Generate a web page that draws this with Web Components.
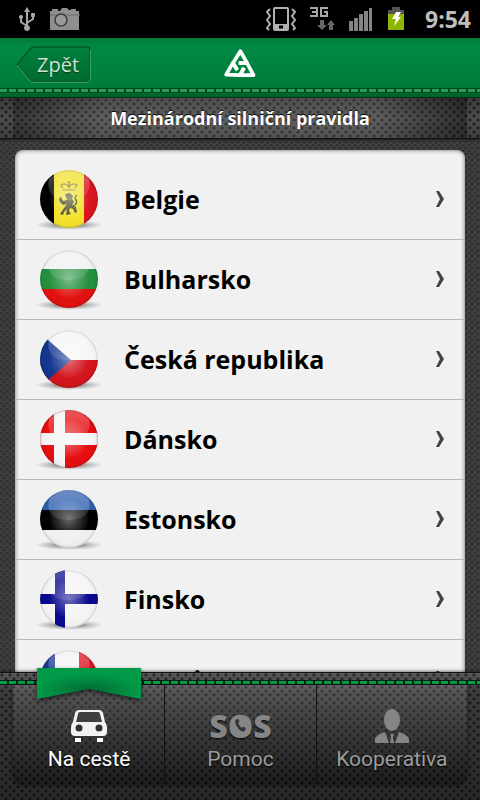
<!DOCTYPE html>
<html lang="cs">
<head>
<meta charset="utf-8">
<meta name="viewport" content="width=device-width, initial-scale=1">
<title>Mezinárodní silniční pravidla</title>
<style>
    :root {
        --holes:
            radial-gradient(circle at 2px 2px, rgba(0, 0, 0, 0.55) 1px, transparent 2px) 0 0 / 8px 8px,
            radial-gradient(circle at 6px 6px, rgba(0, 0, 0, 0.55) 1px, transparent 2px) 0 0 / 8px 8px;
        --weave:
            radial-gradient(circle at 1px 1px, rgba(0, 0, 0, 0.25) 1px, transparent 2px) 0 0 / 6px 6px,
            radial-gradient(circle at 4px 4px, rgba(0, 0, 0, 0.25) 1px, transparent 2px) 0 0 / 6px 6px;
        --font-title: "Open Sans", "Noto Sans", sans-serif;
        --font-ui: Roboto, "Noto Sans", sans-serif;
    }

    body {
        margin: 0;
        background: #000;
    }
</style>
</head>
<body>
<road-app>
    <status-bar slot="status" time="9:54"></status-bar>
    <app-header slot="header" back="Zpět"></app-header>
    <page-title slot="title">Mezinárodní silniční pravidla</page-title>
    <country-list>
        <country-row flag="be">Belgie</country-row>
        <country-row flag="bg">Bulharsko</country-row>
        <country-row flag="cz">Česká republika</country-row>
        <country-row flag="dk">Dánsko</country-row>
        <country-row flag="ee">Estonsko</country-row>
        <country-row flag="fi">Finsko</country-row>
        <country-row flag="fr">Francie</country-row>
    </country-list>
    <tab-bar slot="tabs">
        <tab-item icon="car" active>Na cestě</tab-item>
        <tab-item icon="sos">Pomoc</tab-item>
        <tab-item icon="person">Kooperativa</tab-item>
    </tab-bar>
</road-app>

<script>
// App shell: bars on top, list in the middle, tabs at the bottom
class RoadApp extends HTMLElement {
    constructor() {
        super();
        this.attachShadow({ mode: 'open' });
        this.shadowRoot.innerHTML = `
            <style>
                :host {
                    display: flex;
                    flex-direction: column;
                    height: 100vh;
                    overflow: hidden;
                    background: var(--weave), #3f3f3f;
                }

                main {
                    flex: 1;
                    min-height: 0;
                    overflow: hidden;
                    padding: 11px 15px 0;
                }
            </style>
            <slot name="status"></slot>
            <slot name="header"></slot>
            <slot name="title"></slot>
            <main><slot></slot></main>
            <slot name="tabs"></slot>
        `;
    }
}

// System status bar
class StatusBar extends HTMLElement {
    constructor() {
        super();
        this.attachShadow({ mode: 'open' });
    }

    connectedCallback() {
        this.shadowRoot.innerHTML = `
            <style>
                :host {
                    display: flex;
                    align-items: center;
                    justify-content: space-between;
                    height: 38px;
                    padding: 0 9px 0 18px;
                    background: #000;
                    color: #bebebe;
                }

                .group {
                    display: flex;
                    align-items: center;
                    gap: 14px;
                }

                svg {
                    display: block;
                }

                time {
                    font: 700 23px/38px var(--font-title);
                    margin-left: 6px;
                }
            </style>
            <div class="group">
                <svg width="18" height="26" viewBox="0 0 18 26" fill="#a6a6a6" stroke="#a6a6a6">
                    <path d="M9 5v17M9 20l-6-4v-5M9 17l6-4V9" fill="none" stroke-width="2"/>
                    <path d="M9 1l3 5H6z" stroke="none"/>
                    <circle cx="9" cy="22" r="2.5"/>
                    <circle cx="3" cy="11" r="1.6"/>
                    <path d="M13.5 7.500h3v3h-3z"/>
                </svg>
                <svg width="30" height="24" viewBox="0 0 30 24">
                    <path d="M0 4h2V2h6v2h2l2-3h5l2 2h2V2h5v2h3v19H0z" fill="#8f8f8f"/>
                    <path d="M0 8h30" stroke="#6d6d6d"/>
                    <circle cx="11" cy="13" r="6" fill="#999" stroke="#3c3c3c" stroke-width="1.5"/>
                </svg>
            </div>
            <div class="group">
                <svg width="30" height="24" viewBox="0 0 30 24" fill="none" stroke="#b0b0b0">
                    <path d="M4 2L1 5l3 4-3 4 3 4-3 4 2 2M26 2l3 3-3 4 3 4-3 4 3 4-2 2" stroke-width="2"/>
                    <rect x="8" y="1" width="14" height="22" rx="1" stroke-width="2"/>
                    <path d="M8 19.500h14" stroke-width="5"/>
                    <path d="M13 20h4" stroke="#000" stroke-width="3"/>
                </svg>
                <svg width="25" height="24" viewBox="0 0 25 24">
                    <path d="M0 1h7v8H0M2 5h5M18 1h-7v8h6V5h-3" fill="none" stroke="#a8a8a8" stroke-width="2"/>
                    <path d="M10 13h4v5h3l-5 5-5-5h3zM19 23h4v-5h2l-4-5-4 5h2z" fill="#666"/>
                </svg>
                <svg width="24" height="24" viewBox="0 0 24 24" fill="#858585">
                    <path d="M0 14h4v10H0zM5 11h4v13H5zM10 7h4v17h-4zM15 4h4v20h-4zM20 1h3v23h-3z"/>
                </svg>
                <svg width="18" height="24" viewBox="0 0 18 24">
                    <path d="M5 0h8v3h4v6H1V3h4z" fill="#555"/>
                    <path d="M1 7h16v16H1z" fill="#8db600"/>
                    <path d="M9 5h5l-3 5h3l-7 9 2-7H5z" fill="#fff"/>
                </svg>
                <time>${this.getAttribute('time')}</time>
            </div>
        `;
    }
}

// Green header with the back button, the logo and a stitched seam
class AppHeader extends HTMLElement {
    constructor() {
        super();
        this.attachShadow({ mode: 'open' });
    }

    connectedCallback() {
        this.shadowRoot.innerHTML = `
            <style>
                :host {
                    display: block;
                    background: linear-gradient(#007a39, #008943 8px, #007c3b 48px, #00602c);
                    border-bottom: 1px solid #003317;
                }

                .bar {
                    display: grid;
                    grid-template-columns: 1fr auto 1fr;
                    align-items: center;
                    height: 50px;
                    padding: 0 16px;
                }

                button {
                    position: relative;
                    justify-self: start;
                    width: 75px;
                    height: 37px;
                    margin-top: 3px;
                    padding: 0 0 0 9px;
                    border: 0;
                    background: none;
                    color: #cfe0d0;
                    font: 400 20px/36px var(--font-title);
                    text-shadow: 0 1px 1px #00401c;
                    cursor: pointer;
                }

                button svg {
                    position: absolute;
                    inset: 0;
                }

                button span {
                    position: relative;
                }

                .seam {
                    height: 3px;
                    margin-bottom: 4px;
                    border: solid #00491f;
                    border-width: 1px 0;
                    background: repeating-linear-gradient(90deg, #2a9c5a 0 7px, #00491f 7px 9px);
                }
            </style>
            <div class="bar">
                <button type="button">
                    <svg width="75" height="37" viewBox="0 0 75 37">
                        <defs>
                            <linearGradient id="g" x2="0" y2="1">
                                <stop stop-color="#00813c"/>
                                <stop offset="1" stop-color="#006a31"/>
                            </linearGradient>
                        </defs>
                        <path d="M1 18.500L14 3q2-2 4-2h53q3 0 3 3v29q0 3-3 3H18q-2 0-4-2z" fill="url(#g)" stroke="#00592a" stroke-width="1.500"/>
                        <path d="M1 19L14 35q1 1.500 4 1.500h53q3.500 0 3.500-3V4" fill="none" stroke="#3ca26a"/>
                    </svg>
                    <span>${this.getAttribute('back')}</span>
                </button>
                <svg width="32" height="30" viewBox="0 0 32 30" role="img" aria-label="Kooperativa">
                    <defs>
                        <path id="link" d="M14.500 15H23L29.500 27.200H16L19.500 20.500"/>
                    </defs>
                    <g fill="none" stroke="#fff" stroke-width="3.700" stroke-linejoin="round">
                        <use href="#link"/>
                        <use href="#link" transform="rotate(120 16 19)"/>
                        <use href="#link" transform="rotate(240 16 19)"/>
                    </g>
                </svg>
            </div>
            <div class="seam"></div>
        `;
    }
}

// Perforated title strip
class PageTitle extends HTMLElement {
    constructor() {
        super();
        this.attachShadow({ mode: 'open' });
        this.shadowRoot.innerHTML = `
            <style>
                :host {
                    display: block;
                    padding: 0 13px;
                    border-bottom: 1px solid #111;
                    background: var(--holes), linear-gradient(#3a3a3a, #4c4c4c 50%, #404040);
                    box-shadow: 0 1px 2px rgba(0, 0, 0, 0.5);
                }

                h1 {
                    margin: 0;
                    background: linear-gradient(90deg, rgba(0, 0, 0, 0.25), rgba(255, 255, 255, 0.1) 20% 80%, rgba(0, 0, 0, 0.35));
                    color: #fff;
                    font: 700 18px/40px var(--font-title);
                    text-align: center;
                    text-shadow: 0 -1px 1px #000;
                }
            </style>
            <h1><slot></slot></h1>
        `;
    }
}

class CountryList extends HTMLElement {
    constructor() {
        super();
        this.attachShadow({ mode: 'open' });
        this.shadowRoot.innerHTML = `
            <style>
                :host {
                    display: block;
                    padding-top: 10px;
                    border-radius: 8px 8px 0 0;
                    background: #f1f1f1;
                    box-shadow: inset 0 0 4px rgba(0, 0, 0, 0.6);
                }
            </style>
            <nav><slot></slot></nav>
        `;
    }
}

// One country: flag, name and arrow
class CountryRow extends HTMLElement {
    constructor() {
        super();
        this.attachShadow({ mode: 'open' });
    }

    connectedCallback() {
        const flag = this.getAttribute('flag');
        this.shadowRoot.innerHTML = `
            <style>
                :host {
                    display: block;
                }

                a {
                    display: flex;
                    align-items: center;
                    height: 77px;
                    padding: 0 20px 2px 19px;
                    border-bottom: 1px solid #b9b9b9;
                    color: #000;
                    font: 700 25px/32px var(--font-title);
                    text-decoration: none;
                }

                .name {
                    flex: 1;
                    margin-left: 20px;
                }
            </style>
            <a href="#${flag}">
                <flag-icon code="${flag}"></flag-icon>
                <span class="name"><slot></slot></span>
                <svg width="10" height="16" viewBox="0 0 10 16">
                    <path d="M1 0h3l5 8-5 8H1l4-8z" fill="#444"/>
                </svg>
            </a>
        `;
    }
}

// Glossy round flags, drawn in a 58x58 circle
const FLAGS = {
    be: `<path d="M0 0h14v58H0z" fill="#000"/><path d="M14 0h30v58H14z" fill="#f2e22a"/><path d="M44 0h14v58H44z" fill="#d9141e"/>
        <g fill="none" stroke="#85792f" stroke-width="1.200">
            <path d="M23 20h12M23 18q-4-4 1-4 4 0 5 4 1-4 5-4 5 0 1 4M29 18v-6M27.500 12h3"/>
        </g>
        <path d="M25 24l5-1 3 3-1 3 2 3-2 3 4 2 1 5-2 1-2-4-3-1-1 3 2 3-5 1 1-6-3 3-1 3-3-1 4-6 3-4-4 1-3-3-1-4 2-1 2 4 4-1z" fill="#4c4826"/>
        <path d="M33 36q5-2 3-6-2-3 1-5" fill="none" stroke="#4c4826" stroke-width="1.500"/>`,
    bg: '<path d="M0 0h58v19H0z" fill="#f1f1f1"/><path d="M0 19h58v20H0z" fill="#238f3c"/><path d="M0 39h58v19H0z" fill="#e11010"/>',
    cz: '<path d="M0 0h58v30H0z" fill="#f6f6f6"/><path d="M0 30h58v28H0z" fill="#d3141c"/><path d="M0 3l31 27L0 57z" fill="#14368f"/>',
    dk: '<path d="M0 0h58v58H0z" fill="#e60d10"/><path d="M14 0h11v58H14zM0 23h58v12H0z" fill="#f4f4f4"/>',
    ee: '<path d="M0 0h58v20H0z" fill="#2f5fae"/><path d="M0 20h58v20H0z" fill="#000"/><path d="M0 40h58v18H0z" fill="#f0f0f0"/>',
    fi: '<path d="M0 0h58v58H0z" fill="#f4f4f4"/><path d="M15 0h10v58H15zM0 24h58v10H0z" fill="#08088f"/>',
    fr: '<path d="M0 0h15v58H0z" fill="#1c3a98"/><path d="M15 0h24v58H15z" fill="#f4f4f4"/><path d="M39 0h19v58H39z" fill="#dd1420"/>'
};

class FlagIcon extends HTMLElement {
    constructor() {
        super();
        this.attachShadow({ mode: 'open' });
    }

    connectedCallback() {
        this.shadowRoot.innerHTML = `
            <style>
                :host {
                    display: block;
                    width: 70px;
                    height: 64px;
                }

                svg {
                    display: block;
                }
            </style>
            <svg width="70" height="64" viewBox="-6 -3 70 64">
                <defs>
                    <clipPath id="round"><circle cx="29" cy="29" r="29"/></clipPath>
                    <radialGradient id="glow">
                        <stop stop-color="#fff" stop-opacity="0.4"/>
                        <stop offset="0.7" stop-color="#fff" stop-opacity="0"/>
                        <stop offset="0.92" stop-color="#000" stop-opacity="0.02"/>
                        <stop offset="1" stop-color="#000" stop-opacity="0.18"/>
                    </radialGradient>
                    <linearGradient id="gloss" x2="0" y2="1">
                        <stop stop-color="#fff" stop-opacity="0.3"/>
                        <stop offset="1" stop-color="#fff" stop-opacity="0.1"/>
                    </linearGradient>
                    <radialGradient id="shade">
                        <stop stop-opacity="0.7"/>
                        <stop offset="0.6" stop-opacity="0.2"/>
                        <stop offset="1" stop-opacity="0"/>
                    </radialGradient>
                </defs>
                <ellipse cx="29" cy="55" rx="34" ry="5" fill="url(#shade)"/>
                <g clip-path="url(#round)">
                    ${FLAGS[this.getAttribute('code')]}
                    <circle cx="29" cy="29" r="29" fill="url(#glow)"/>
                    <path d="M9 9Q29-10 49 9q4 20-20 21T9 9z" fill="url(#gloss)"/>
                </g>
            </svg>
        `;
    }
}

// Bottom tabs
class TabBar extends HTMLElement {
    constructor() {
        super();
        this.attachShadow({ mode: 'open' });
        this.shadowRoot.innerHTML = `
            <style>
                :host {
                    display: block;
                    position: relative;
                    padding: 7px 13px 15px;
                    border-top: 1px solid #111;
                    background: var(--holes), linear-gradient(#585858, #3c3c3c 20px, #282828);
                    box-shadow: 0 -1px 3px rgba(0, 0, 0, 0.5);
                }

                .seam {
                    height: 3px;
                    margin: 0 -13px;
                    border: solid #0d1a12;
                    border-width: 1px 0;
                    background: repeating-linear-gradient(90deg, #00a14b 0 7px, #0d1a12 7px 9px);
                }

                nav {
                    display: grid;
                    grid-template-columns: repeat(3, 1fr);
                    height: 100px;
                    border-radius: 0 0 10px 10px;
                    overflow: hidden;
                    background: linear-gradient(rgba(255, 255, 255, 0.14), rgba(0, 0, 0, 0.35));
                    box-shadow: 0 0 3px rgba(0, 0, 0, 0.7);
                }
            </style>
            <div class="seam"></div>
            <nav><slot></slot></nav>
        `;
    }
}

const TAB_ICONS = {
    car: `<svg width="36" height="34" viewBox="0 0 36 34">
            <path d="M8 1h20q3 0 4 3l2 9q2 2 2 5v5q0 4-4 4H4q-4 0-4-4v-5q0-3 2-5l2-9q1-3 4-3z" fill="#f2f2f2"/>
            <path d="M9 3h18q2 0 2 2l2 8H5l2-8q0-2 2-2z" fill="#404040"/>
            <circle cx="8" cy="19" r="3.500" fill="#303030"/>
            <circle cx="28" cy="19" r="3.500" fill="#303030"/>
            <path d="M4 29h6v4H4zM26 29h6v4h-6z" fill="#fff"/>
        </svg>`,
    sos: `<span class="sos">SOS<svg width="20" height="26" viewBox="0 0 22 26">
            <ellipse cx="11" cy="13" rx="10.500" ry="12.500" fill="#858585"/>
            <path d="M6 7q1-3 4-1 1 2-1 4 1 3 4 5 2-2 4 0 1 3-2 4-4 0-7-5-3-4-2-7z" fill="#333"/>
        </svg></span>`,
    person: `<svg width="34" height="34" viewBox="0 0 34 34" fill="#858585">
            <ellipse cx="17" cy="11" rx="8" ry="11"/>
            <path d="M0 34v-4q1-4 10-7l4 11zM34 34v-4q-1-4-10-7l-4 11zM15 25h4l-1 3 1 6h-4l1-6z"/>
        </svg>`
};

class TabItem extends HTMLElement {
    constructor() {
        super();
        this.attachShadow({ mode: 'open' });
    }

    connectedCallback() {
        this.shadowRoot.innerHTML = `
            <style>
                :host {
                    display: block;
                    border-left: 1px solid #111;
                    color: #9d9d9d;
                }

                :host(:first-child) {
                    border-left-color: transparent;
                }

                :host([active]) {
                    color: #fff;
                }

                button {
                    display: flex;
                    flex-direction: column;
                    align-items: center;
                    gap: 2px;
                    width: 100%;
                    height: 100%;
                    padding: 24px 0 0;
                    border: 0;
                    background: none;
                    color: inherit;
                    font: 400 21px/28px var(--font-ui);
                    text-shadow: 0 1px 2px #000;
                    cursor: pointer;
                }

                button svg {
                    display: block;
                }

                .sos {
                    position: relative;
                    color: #858585;
                    font: 800 32px/34px var(--font-title);
                }

                .sos svg {
                    position: absolute;
                    top: 4px;
                    left: calc(50% - 10px);
                }

                /* ribbon that hangs over the seam of the open tab */
                .ribbon {
                    position: absolute;
                    top: -5px;
                    left: 37px;
                    filter: drop-shadow(0 2px 2px rgba(0, 0, 0, 0.6));
                }
            </style>
            <button type="button">
                ${this.hasAttribute('active') ? `
                <svg class="ribbon" width="104" height="31" viewBox="0 0 104 31">
                    <defs>
                        <radialGradient id="fold" cx="0.5" cy="0.7" r="0.5">
                            <stop stop-color="#006b32"/>
                            <stop offset="1" stop-color="#009a48"/>
                        </radialGradient>
                    </defs>
                    <path d="M0 0h104v31L52 21 0 31z" fill="url(#fold)"/>
                </svg>` : ''}
                ${TAB_ICONS[this.getAttribute('icon')]}
                <span><slot></slot></span>
            </button>
        `;
    }
}

customElements.define('road-app', RoadApp);
customElements.define('status-bar', StatusBar);
customElements.define('app-header', AppHeader);
customElements.define('page-title', PageTitle);
customElements.define('country-list', CountryList);
customElements.define('flag-icon', FlagIcon);
customElements.define('country-row', CountryRow);
customElements.define('tab-bar', TabBar);
customElements.define('tab-item', TabItem);
</script>
</body>
</html>
